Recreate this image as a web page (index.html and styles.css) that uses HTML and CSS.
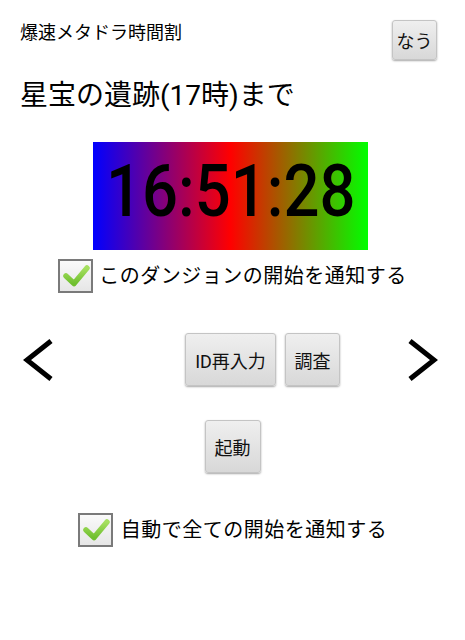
FILE: index.html
```html
<!DOCTYPE html>
<html lang="ja">
<head>
<meta charset="utf-8">
<link rel="stylesheet" href="styles.css">
</head>
<body>
<div class="app">
  <div class="header">
    <div class="title">爆速メタドラ時間割</div>
    <button class="btn btn-now">なう</button>
  </div>
  <h1 class="heading">星宝の遺跡(17時)まで</h1>
  <div class="timer"><span class="timer-text">16:51:28</span></div>
  <label class="check-row check-row-1">
    <span class="checkbox"><svg viewBox="0 0 35 34" width="35" height="34"><defs><linearGradient id="g1" x1="0" y1="0" x2="0" y2="1"><stop offset="0" stop-color="#a6e060"/><stop offset="1" stop-color="#6fbf2e"/></linearGradient></defs><path d="M8 17 L16 24.5 L29 9" fill="none" stroke="url(#g1)" stroke-width="5.5" stroke-linecap="round" stroke-linejoin="round"/></svg></span>
    <span class="check-label">このダンジョンの開始を通知する</span>
  </label>
  <div class="nav-row">
    <svg class="arrow" viewBox="0 0 31 42" width="31" height="42"><path d="M28 2 L4 21 L28 40" fill="none" stroke="#000" stroke-width="5"/></svg>
    <div class="nav-mid">
      <button class="btn btn-id">ID再入力</button>
      <button class="btn btn-survey">調査</button>
    </div>
    <svg class="arrow" viewBox="0 0 31 42" width="31" height="42"><path d="M3 2 L27 21 L3 40" fill="none" stroke="#000" stroke-width="5"/></svg>
  </div>
  <div class="start-row">
    <button class="btn btn-start">起動</button>
  </div>
  <label class="check-row check-row-2">
    <span class="checkbox"><svg viewBox="0 0 35 34" width="35" height="34"><defs><linearGradient id="g2" x1="0" y1="0" x2="0" y2="1"><stop offset="0" stop-color="#a6e060"/><stop offset="1" stop-color="#6fbf2e"/></linearGradient></defs><path d="M8 17 L16 24.5 L29 9" fill="none" stroke="url(#g2)" stroke-width="5.5" stroke-linecap="round" stroke-linejoin="round"/></svg></span>
    <span class="check-label">自動で全ての開始を通知する</span>
  </label>
</div>
</body>
</html>
```

FILE: styles.css
```css
html, body {
  margin: 0;
  padding: 0;
  background: #fff;
}
body {
  font-family: Roboto, "Noto Sans CJK JP", sans-serif;
  color: #000;
  width: 465px;
  height: 640px;
  overflow: hidden;
}
.app {
  display: flex;
  flex-direction: column;
}
.header {
  display: flex;
  justify-content: space-between;
  align-items: flex-start;
  padding: 20px 28px 0 20px;
}
.title {
  font-size: 18px;
  line-height: 26px;
}
.btn {
  font-family: Roboto, "Noto Sans CJK JP", sans-serif;
  font-size: 18px;
  color: #111;
  background: linear-gradient(#efefef, #d8d8d8);
  border: 1px solid #c4c4c4;
  border-radius: 3px;
  box-shadow: 0 1px 2px rgba(0, 0, 0, 0.35);
  padding: 0;
  display: flex;
  align-items: center;
  justify-content: center;
}
.btn-now {
  width: 45px;
  height: 40px;
}
.heading {
  margin: 16px 0 0 20px;
  font-size: 28px;
  line-height: 40px;
  font-weight: normal;
}
.timer {
  margin: 26px 0 0 93px;
  width: 275px;
  height: 108px;
  box-sizing: border-box;
  padding-bottom: 8px;
  background: linear-gradient(to right, #0000ff, #ff0000 50%, #00ff00);
  display: flex;
  align-items: center;
  justify-content: center;
}
.timer-text {
  display: inline-block;
  font-family: Roboto, sans-serif;
  font-weight: 500;
  font-size: 72px;
  line-height: 72px;
  transform: scaleX(0.88);
}
.check-row {
  display: flex;
  justify-content: center;
  align-items: center;
  gap: 6px;
  height: 34px;
}
.check-row-1 {
  margin-top: 9px;
}
.check-row-2 {
  margin-top: 40px;
  gap: 8px;
}
.checkbox {
  width: 35px;
  height: 34px;
  box-sizing: border-box;
  border: 2px solid #7a7a7a;
  background: linear-gradient(#fafafa, #e6e6e6);
  position: relative;
  display: block;
}
.checkbox svg {
  position: absolute;
  left: -2px;
  top: -2px;
}
.check-label {
  font-size: 20px;
  line-height: 28px;
  letter-spacing: 0.5px;
}
.nav-row {
  margin-top: 40px;
  display: flex;
  align-items: center;
  padding: 0 27px 0 23px;
  height: 53px;
}
.arrow {
  display: block;
  flex: none;
}
.nav-mid {
  flex: 1;
  display: flex;
  gap: 9px;
  padding-left: 131px;
}
.btn-id {
  width: 91px;
  height: 53px;
}
.btn-survey {
  width: 55px;
  height: 53px;
}
.start-row {
  margin-top: 34px;
  display: flex;
  justify-content: center;
}
.btn-start {
  width: 56px;
  height: 53px;
}
```
